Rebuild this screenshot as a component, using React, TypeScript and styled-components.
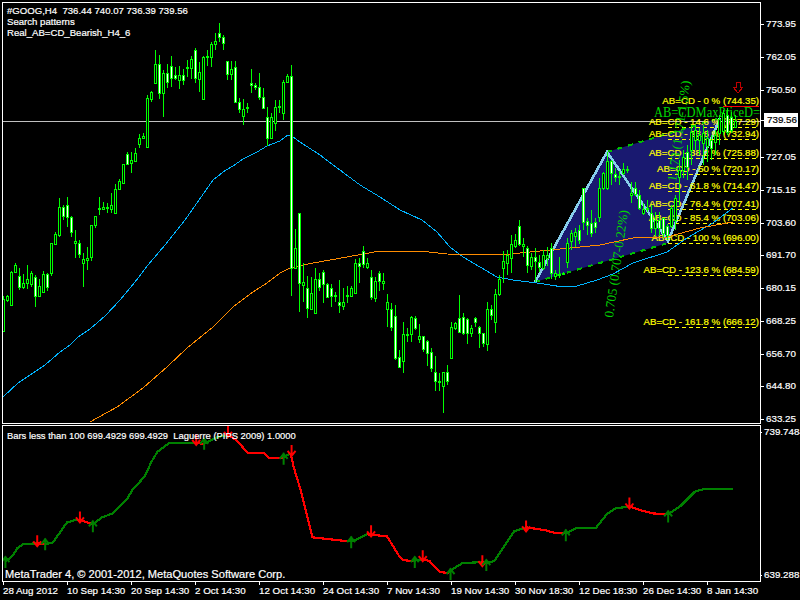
import styled, { createGlobalStyle } from 'styled-components'

const GlobalStyle = createGlobalStyle`
  html, body {
    margin: 0;
    padding: 0;
    background: #000;
  }
`

const Terminal = styled.div`
  width: 800px;
  height: 600px;
  overflow: hidden;
  background: #000;
  box-sizing: border-box;
  padding: 2px 0 0 2px;
  display: grid;
  grid-template-columns: 759px 39px;
  grid-template-rows: 422px 158px 18px;
  row-gap: 0;
  font-family: "Liberation Sans", Arial, sans-serif;
  color: #fff;
  -webkit-text-stroke: 0.2px currentColor;
`

const Pane = styled.div<{ $gap?: boolean }>`
  position: relative;
  box-sizing: border-box;
  border: 1px solid #fff;
  margin-top: ${p => (p.$gap ? '1px' : '0')};
  overflow: hidden;
`

const ChartSvg = styled.svg`
  display: block;
  width: 757px;
  height: 100%;
`

const Legend = styled.div`
  position: absolute;
  top: 2px;
  left: 4px;
  font-size: 9.6px;
  line-height: 11px;
  display: flex;
  flex-direction: column;
  white-space: pre;
`

const LegendLine = styled.div`
  height: 11px;
`

const SubLegend = styled.div`
  position: absolute;
  top: 4px;
  left: 4px;
  font-size: 9.4px;
  line-height: 12px;
  white-space: pre;
`

const Copyright = styled.div`
  position: absolute;
  left: 2px;
  bottom: 0;
  font-size: 11.1px;
  line-height: 14px;
  white-space: pre;
`

const PriceAxis = styled.div`
  display: flex;
  flex-direction: column;
  justify-content: space-between;
  padding-top: 16px;
  margin-bottom: -1px;
`

const SubAxis = styled.div`
  display: flex;
  flex-direction: column;
  justify-content: space-between;
  padding: 1px 0;
  margin-top: 1px;
`

const AxisLabel = styled.div<{ $tight?: boolean }>`
  position: relative;
  height: 12px;
  line-height: 12px;
  font-size: 9.8px;
  padding-left: ${p => (p.$tight ? '3px' : '5px')};
  white-space: nowrap;

  &::before {
    content: '';
    position: absolute;
    left: 0;
    top: 6px;
    width: ${p => (p.$tight ? '1px' : '3px')};
    height: 1px;
    background: #fff;
  }
`

const CurrentPrice = styled(AxisLabel)`
  width: 34px;
  height: 14px;
  line-height: 14px;
  padding-left: 3px;
  margin-left: 3px;
  box-sizing: border-box;
  background: #fff;
  color: #000;
  transform: translateY(-3px);

  &::before {
    left: -3px;
    top: 7px;
  }
`

const TimeAxis = styled.div`
  grid-column: 1 / span 2;
  display: flex;
  padding-left: 1px;
`

const TimeLabel = styled.div`
  position: relative;
  flex: 0 0 64px;
  font-size: 9.8px;
  line-height: 12px;
  padding-top: 3px;
  white-space: nowrap;

  &::before {
    content: '';
    position: absolute;
    left: 0;
    top: 0;
    width: 1px;
    height: 3px;
    background: #fff;
  }
`

// x of candle i is 3 + 4 * i : high, low, body top, body bottom, filled
type Candle = [number, number, number, number, number]

const candles: Candle[] = [
  [296, 331, 299, 331, 0], [295, 302, 296, 300, 0], [271, 305, 272, 305, 0], [263, 272, 265, 272, 0],
  [268, 290, 276, 287, 1], [274, 289, 283, 287, 0], [265, 289, 279, 283, 0], [271, 287, 273, 284, 0],
  [275, 307, 277, 296, 1], [279, 296, 286, 296, 0], [271, 292, 274, 292, 0], [273, 291, 274, 287, 1],
  [243, 276, 243, 273, 0], [232, 244, 234, 244, 0], [198, 237, 207, 235, 0], [205, 220, 207, 216, 1],
  [197, 227, 205, 217, 1], [216, 237, 217, 232, 1], [230, 258, 241, 243, 0], [240, 258, 243, 254, 1],
  [253, 287, 259, 263, 0], [247, 270, 258, 260, 0], [225, 261, 225, 257, 0], [216, 228, 216, 225, 0],
  [197, 215, 208, 209, 0], [202, 210, 207, 209, 0], [203, 213, 207, 208, 0], [193, 213, 205, 209, 0],
  [184, 213, 189, 213, 0], [179, 190, 181, 189, 0], [164, 184, 164, 183, 0], [152, 165, 154, 164, 1],
  [152, 173, 160, 163, 0], [148, 161, 153, 161, 0], [134, 148, 138, 144, 0], [133, 139, 136, 138, 0],
  [95, 147, 98, 147, 0], [91, 102, 92, 99, 0], [50, 84, 64, 83, 0], [55, 99, 64, 93, 1],
  [70, 117, 73, 93, 0], [64, 88, 73, 82, 1], [56, 87, 66, 78, 1], [67, 80, 75, 78, 1],
  [66, 89, 75, 80, 0], [69, 85, 75, 80, 1], [60, 77, 67, 68, 0], [56, 79, 59, 68, 0],
  [48, 83, 50, 78, 1], [62, 92, 72, 79, 0], [56, 99, 57, 99, 0], [50, 66, 56, 57, 0],
  [42, 67, 44, 57, 0], [33, 50, 41, 44, 0], [23, 42, 33, 37, 1], [35, 50, 37, 43, 1],
  [61, 80, 61, 74, 1], [61, 80, 69, 74, 0], [61, 103, 67, 102, 1], [98, 113, 102, 109, 1],
  [99, 125, 109, 116, 0], [103, 113, 107, 108, 0], [69, 93, 83, 85, 1], [83, 90, 85, 87, 1],
  [73, 100, 87, 97, 1], [88, 109, 97, 108, 1], [107, 146, 117, 138, 1], [113, 138, 117, 138, 0],
  [100, 131, 107, 123, 0], [100, 113, 106, 107, 0], [80, 120, 82, 113, 0], [74, 82, 76, 82, 0],
  [65, 296, 76, 268, 1], [229, 268, 248, 268, 0], [213, 312, 213, 283, 1], [263, 302, 282, 285, 0],
  [276, 318, 288, 308, 1], [277, 310, 293, 309, 0], [268, 313, 279, 313, 0], [273, 291, 279, 287, 1],
  [270, 303, 272, 284, 1], [283, 298, 284, 297, 1], [284, 307, 288, 296, 1], [292, 302, 295, 296, 0],
  [280, 313, 302, 305, 1], [288, 310, 302, 306, 0], [286, 303, 295, 296, 0], [286, 297, 288, 296, 0],
  [259, 293, 263, 293, 0], [258, 283, 263, 266, 1], [246, 268, 251, 264, 1], [258, 269, 263, 267, 0],
  [270, 300, 277, 297, 1], [277, 302, 281, 298, 0], [271, 291, 273, 281, 1], [273, 290, 281, 283, 0],
  [294, 327, 302, 309, 0], [303, 331, 309, 327, 1], [305, 360, 316, 358, 1], [350, 368, 357, 367, 1],
  [322, 373, 334, 361, 0], [328, 342, 334, 335, 0], [316, 342, 317, 334, 0], [316, 330, 318, 328, 1],
  [324, 343, 336, 339, 0], [336, 352, 336, 349, 1], [340, 366, 341, 353, 1], [348, 372, 352, 368, 1],
  [356, 391, 372, 381, 1], [373, 391, 381, 382, 0], [372, 413, 372, 386, 0], [365, 385, 372, 381, 1],
  [322, 358, 327, 358, 0], [322, 330, 323, 328, 0], [295, 333, 318, 332, 1], [313, 335, 317, 333, 1],
  [318, 344, 319, 333, 1], [325, 337, 328, 333, 0], [317, 327, 318, 322, 1], [326, 348, 327, 333, 1],
  [333, 347, 333, 343, 1], [302, 351, 309, 344, 0], [305, 320, 309, 315, 1], [289, 333, 294, 322, 0],
  [275, 296, 279, 294, 0], [251, 283, 261, 268, 0], [250, 275, 255, 263, 0], [235, 273, 244, 258, 0],
  [234, 248, 240, 246, 0], [220, 246, 226, 244, 1], [238, 257, 244, 246, 0], [246, 273, 248, 265, 1],
  [253, 270, 257, 266, 0], [248, 282, 257, 261, 1], [255, 272, 262, 267, 1], [250, 270, 255, 268, 0],
  [247, 266, 255, 258, 0], [243, 279, 248, 273, 1], [270, 280, 273, 276, 0], [257, 278, 274, 275, 0],
  [272, 275, 273, 274, 0], [238, 268, 243, 262, 0], [230, 250, 233, 241, 0], [228, 247, 232, 236, 0],
  [225, 244, 230, 240, 1], [188, 230, 188, 222, 1], [218, 235, 221, 225, 1], [210, 237, 223, 233, 1],
  [218, 233, 222, 227, 1], [178, 222, 188, 217, 0], [172, 190, 173, 188, 0], [152, 190, 161, 188, 0],
  [160, 185, 161, 173, 1], [168, 182, 174, 177, 1], [171, 185, 176, 177, 0], [163, 175, 169, 173, 0],
  [166, 173, 169, 170, 0], [182, 203, 193, 195, 0], [182, 196, 188, 194, 1], [190, 210, 195, 208, 1],
  [203, 215, 209, 213, 0], [200, 212, 208, 209, 0], [205, 233, 213, 228, 1], [212, 236, 220, 228, 0],
  [212, 236, 220, 228, 1], [218, 238, 218, 233, 1], [224, 240, 226, 235, 1], [205, 228, 208, 226, 0],
  [195, 230, 198, 220, 0], [160, 205, 170, 177, 0], [150, 178, 157, 170, 0], [145, 180, 152, 167, 1],
  [125, 165, 132, 150, 0], [125, 150, 130, 140, 0], [128, 155, 135, 140, 0], [125, 165, 133, 143, 0],
  [130, 162, 138, 146, 0], [135, 160, 140, 148, 1], [130, 155, 135, 142, 0], [115, 145, 119, 133, 0],
  [110, 135, 113, 131, 0], [108, 135, 115, 132, 1], [112, 133, 117, 130, 1], [115, 128, 121, 127, 0],
]

const blueMa = '3,397 18,383 30,375 45,365 60,352 70,345 78,337 90,329 105,316 120,300 135,282 148,265 165,245 185,220 213,180 217,177 223,172 233,166 243,159 257,152 267,146 280,141 288,135 293,137 300,142 320,155 340,170 360,185 380,197 400,210 422,220 437,232 450,247 463,257 480,267 497,277 513,280 537,283 563,287 577,286 597,280 613,274 633,263 667,252 687,238 713,223 733,208'
const orangeMa = '90,422 117,407 143,388 167,367 187,348 213,327 233,307 253,292 267,283 280,273 290,268 313,263 347,257 380,251 420,251 447,254 500,255 550,250 600,245 633,238 667,237 700,228 733,222'

type Level = { text: string; y: number; colour?: string }

const levels: Level[] = [
  { text: 'AB=CD - 0 % (744.35)', y: 106, colour: '#ff0000' },
  { text: 'AB=CD - 14.6 % (737.29)', y: 127 },
  { text: 'AB=CD - 23.6 % (732.94)', y: 139 },
  { text: 'AB=CD - 38.2 % (725.88)', y: 158 },
  { text: 'AB=CD - 50 % (720.17)', y: 174 },
  { text: 'AB=CD - 61.8 % (714.47)', y: 191 },
  { text: 'AB=CD - 76.4 % (707.41)', y: 209 },
  { text: 'AB=CD - 85.4 % (703.06)', y: 223 },
  { text: 'AB=CD - 100 % (696.00)', y: 243 },
  { text: 'AB=CD - 123.6 % (684.59)', y: 275 },
  { text: 'AB=CD - 161.8 % (666.12)', y: 327 },
]

const segments: [string, string][] = [
  ['g', '3,562 10,557 15,549 21,545 35,544'],
  ['r', '35,544 43,545'],
  ['g', '43,545 51,543 58,533 65,523 72,521 78,520'],
  ['r', '78,520 85,523 91,525'],
  ['g', '91,525 100,518 111,514 125,500 131,490 143,477 150,462 156,452 168,443 195,443'],
  ['r', '195,443 203,444'],
  ['g', '203,444 217,437 227,435'],
  ['r', '227,435 235,440 247,453 263,453 268,458 283,458'],
  ['g', '283,458 290,453'],
  ['r', '290,453 293,467 300,490 312,538 347,542'],
  ['g', '347,542 353,542 367,535'],
  ['r', '367,535 387,537 400,558 403,561 413,562'],
  ['g', '413,562 423,560'],
  ['r', '423,560 430,562 440,573 450,574'],
  ['g', '450,574 453,570 463,564 482,563'],
  ['r', '482,563 487,564'],
  ['g', '487,564 495,562 503,550 515,532 527,528'],
  ['r', '527,528 547,531 557,534 567,534'],
  ['g', '567,534 577,529 597,529 608,515 617,509 631,507'],
  ['r', '631,507 643,511 655,514 670,515'],
  ['g', '670,515 683,506 697,492 708,489 735,489'],
]

const downArrows = [[35, 543], [78, 519], [195, 441], [227, 433], [291, 452], [371, 533], [423, 558], [483, 563], [527, 528], [631, 505]]
const upArrows = [[3, 563], [43, 545], [91, 527], [203, 444], [283, 459], [351, 543], [415, 563], [451, 575], [487, 566], [567, 536], [670, 517]]

const mainPrices = ['773.95', '762.05', '750.50', '739.56', '727.05', '715.15', '703.60', '691.70', '680.15', '668.25', '656.70', '644.80', '633.25']
const times = ['28 Aug 2012', '10 Sep 14:30', '20 Sep 14:30', '2 Oct 14:30', '12 Oct 14:30', '24 Oct 14:30', '7 Nov 14:30', '19 Nov 14:30', '30 Nov 18:30', '12 Dec 18:30', '26 Dec 14:30', '8 Jan 14:30']

const CandleBars = () => (
  <g shapeRendering="crispEdges">
    {candles.map(([hi, lo, top, bottom, filled], i) => {
      const x = 3 + 4 * i
      return (
        <g key={i}>
          <rect x={x} y={hi} width={1} height={lo - hi} fill="#00ff00" />
          <rect x={x - 1} y={top} width={3} height={Math.max(bottom - top, 1) + 1} fill="#00ff00" />
          {bottom - top > 1 && (
            <rect x={x} y={top + 1} width={1} height={bottom - top - 1} fill={filled ? '#ffffff' : '#000000'} />
          )}
        </g>
      )
    })}
  </g>
)

const Pattern = () => (
  <g>
    <polygon points="535,282 607,152 720,118 668,243" fill="#191970" />
    <g shapeRendering="crispEdges">
      <polyline points="535,282 668,243" fill="none" stroke="#00c000" strokeWidth={2} strokeDasharray="5 6" />
      <polyline points="607,152 720,118" fill="none" stroke="#00c000" strokeWidth={2} strokeDasharray="5 6" />
      <polyline points="535,282 607,152 668,241 720,118" fill="none" stroke="#87ceeb" strokeWidth={2.6} />
      {levels.map(l => (
        <line
          key={l.y}
          x1={l.colour ? 723 : 668}
          x2={759}
          y1={l.y}
          y2={l.y}
          stroke={l.colour ?? '#ffff00'}
          strokeWidth={1}
          strokeDasharray={l.colour ? undefined : '4 3'}
        />
      ))}
    </g>
    <g
      fontFamily='"Liberation Sans", Arial, sans-serif'
      fontSize={9.7}
      fill="#ffff00"
      stroke="#ffff00"
      strokeWidth={0.2}
      textAnchor="end"
    >
      {levels.map(l => (
        <text key={l.y} x={759} y={l.y - 2}>{l.text}</text>
      ))}
    </g>
    <g fontFamily='"Liberation Serif", "Times New Roman", serif' fill="#00d800" stroke="none">
      <text x={654} y={117} fontSize={14} textLength={106} lengthAdjust="spacingAndGlyphs">AB=CDMaxPriceD=</text>
      <text transform="translate(613 318) rotate(-82)" fontSize={13}>0.705 (0.707-0.22%)</text>
      <text transform="translate(676 182) rotate(-82)" fontSize={13}>1.173 (1.171-1.5%)</text>
    </g>
    <path d="M736 82h4v5h3l-5 6-5-6h3z" fill="none" stroke="#c00000" strokeWidth={1} shapeRendering="crispEdges" />
  </g>
)

const SignalArrow = ({ x, y, up }: { x: number; y: number; up: boolean }) => (
  <path
    d={up
      ? `M${x} ${y + 6}V${y - 6}M${x - 4} ${y}L${x} ${y - 5}L${x + 4} ${y}`
      : `M${x} ${y - 7}V${y + 4}M${x - 4} ${y - 1}L${x} ${y + 4}L${x + 4} ${y - 1}`}
    fill="none"
    stroke={up ? '#008000' : '#ff0000'}
    strokeWidth={2}
  />
)

const App = () => {
  return (
    <Terminal>
      <GlobalStyle />
      <Pane>
        <ChartSvg viewBox="3 3 757 420">
          <rect x={3} y={121} width={757} height={1} fill="#c0c0c0" />
          <Pattern />
          <g fill="none" strokeWidth={1} shapeRendering="crispEdges">
            <polyline points={blueMa} stroke="#00b4ff" />
            <polyline points={orangeMa} stroke="#ff8c00" />
          </g>
          <CandleBars />
        </ChartSvg>
        <Legend>
          <LegendLine>#GOOG,H4  736.44 740.07 736.39 739.56</LegendLine>
          <LegendLine>Search patterns</LegendLine>
          <LegendLine>Real_AB=CD_Bearish_H4_6</LegendLine>
        </Legend>
      </Pane>
      <PriceAxis>
        {mainPrices.map(p =>
          p === '739.56' ? <CurrentPrice key={p}>{p}</CurrentPrice> : <AxisLabel key={p}>{p}</AxisLabel>
        )}
      </PriceAxis>
      <Pane $gap>
        <ChartSvg viewBox="3 426 757 156">
          <g fill="none" strokeWidth={2.2} shapeRendering="crispEdges">
            {segments.map(([c, pts], i) => (
              <polyline key={i} points={pts} stroke={c === 'g' ? '#008000' : '#ff0000'} />
            ))}
          </g>
          {downArrows.map(([x, y]) => <SignalArrow key={x} x={x} y={y} up={false} />)}
          {upArrows.map(([x, y]) => <SignalArrow key={x} x={x} y={y} up />)}
        </ChartSvg>
        <SubLegend>Bars less than 100 699.4929 699.4929  Laguerre (PIPS 2009) 1.0000</SubLegend>
        <Copyright>MetaTrader 4, © 2001-2012, MetaQuotes Software Corp.</Copyright>
      </Pane>
      <SubAxis>
        <AxisLabel $tight>739.7484</AxisLabel>
        <AxisLabel $tight>639.2881</AxisLabel>
      </SubAxis>
      <TimeAxis>
        {times.map(t => <TimeLabel key={t}>{t}</TimeLabel>)}
      </TimeAxis>
    </Terminal>
  )
}

export default App
